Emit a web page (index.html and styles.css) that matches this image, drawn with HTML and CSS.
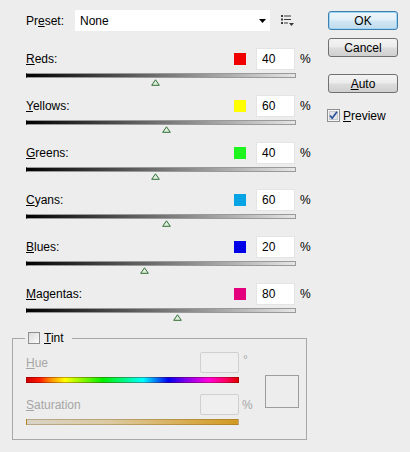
FILE: index.html
```html
<!DOCTYPE html>
<html>
<head>
<meta charset="utf-8">
<link rel="stylesheet" href="styles.css">
</head>
<body>
<div class="dialog">
  <div class="main">
    <div class="preset">
      <span class="preset-label">Pr<u>e</u>set:</span>
      <div class="select">
        <span>None</span>
        <svg class="arrow" width="7" height="4" viewBox="0 0 7 4"><path d="M0 0H7L3.5 4Z" fill="#000"/></svg>
      </div>
      <svg class="menu-icon" width="13" height="11" viewBox="0 0 13 11">
        <g fill="#3a3a3a">
          <rect x="0" y="0" width="2" height="2"/><rect x="3" y="0.5" width="7" height="1"/>
          <rect x="0" y="3.5" width="2" height="2"/><rect x="3" y="4" width="7" height="1"/>
          <rect x="0" y="7" width="2" height="2"/><rect x="3" y="7.5" width="4" height="1"/>
          <path d="M8 8H13L10.5 11Z"/>
        </g>
      </svg>
    </div>

    <div class="rows">
      <div class="row">
        <div class="row-top"><span class="lbl"><u>R</u>eds:</span><span class="swatch sw-red"></span><span class="num">40</span><span class="pct">%</span></div>
        <div class="slider"><span class="thumb" style="left:48%"><svg width="9" height="7" viewBox="0 0 9 7"><path d="M4.5 0.8L8.3 6.3H0.7Z" fill="#dfeedd" stroke="#2f6e35" stroke-width="1"/></svg></span></div>
      </div>
      <div class="row">
        <div class="row-top"><span class="lbl"><u>Y</u>ellows:</span><span class="swatch sw-yellow"></span><span class="num">60</span><span class="pct">%</span></div>
        <div class="slider"><span class="thumb" style="left:52%"><svg width="9" height="7" viewBox="0 0 9 7"><path d="M4.5 0.8L8.3 6.3H0.7Z" fill="#dfeedd" stroke="#2f6e35" stroke-width="1"/></svg></span></div>
      </div>
      <div class="row">
        <div class="row-top"><span class="lbl"><u>G</u>reens:</span><span class="swatch sw-green"></span><span class="num">40</span><span class="pct">%</span></div>
        <div class="slider"><span class="thumb" style="left:48%"><svg width="9" height="7" viewBox="0 0 9 7"><path d="M4.5 0.8L8.3 6.3H0.7Z" fill="#dfeedd" stroke="#2f6e35" stroke-width="1"/></svg></span></div>
      </div>
      <div class="row">
        <div class="row-top"><span class="lbl"><u>C</u>yans:</span><span class="swatch sw-cyan"></span><span class="num">60</span><span class="pct">%</span></div>
        <div class="slider"><span class="thumb" style="left:52%"><svg width="9" height="7" viewBox="0 0 9 7"><path d="M4.5 0.8L8.3 6.3H0.7Z" fill="#dfeedd" stroke="#2f6e35" stroke-width="1"/></svg></span></div>
      </div>
      <div class="row">
        <div class="row-top"><span class="lbl"><u>B</u>lues:</span><span class="swatch sw-blue"></span><span class="num">20</span><span class="pct">%</span></div>
        <div class="slider"><span class="thumb" style="left:44%"><svg width="9" height="7" viewBox="0 0 9 7"><path d="M4.5 0.8L8.3 6.3H0.7Z" fill="#dfeedd" stroke="#2f6e35" stroke-width="1"/></svg></span></div>
      </div>
      <div class="row">
        <div class="row-top"><span class="lbl"><u>M</u>agentas:</span><span class="swatch sw-magenta"></span><span class="num">80</span><span class="pct">%</span></div>
        <div class="slider"><span class="thumb" style="left:56%"><svg width="9" height="7" viewBox="0 0 9 7"><path d="M4.5 0.8L8.3 6.3H0.7Z" fill="#dfeedd" stroke="#2f6e35" stroke-width="1"/></svg></span></div>
      </div>
    </div>

    <fieldset class="tint">
      <legend class="tint-legend"><span class="cbox"></span><span><u>T</u>int</span></legend>
      <div class="tint-body">
        <div class="tint-controls">
          <div class="trow"><span class="dlbl"><u>H</u>ue</span><span class="dnum"></span><span class="unit deg">°</span></div>
          <div class="hue-bar"></div>
          <div class="trow trow-sat"><span class="dlbl"><u>S</u>aturation</span><span class="dnum"></span><span class="unit per">%</span></div>
          <div class="sat-bar"></div>
        </div>
        <div class="tint-swatch"></div>
      </div>
    </fieldset>
  </div>

  <div class="side">
    <button class="btn btn-ok">OK</button>
    <button class="btn btn-cancel">Cancel</button>
    <button class="btn btn-auto"><u>A</u>uto</button>
    <div class="preview">
      <svg width="13" height="13" viewBox="0 0 13 13">
        <rect x="0.5" y="0.5" width="12" height="12" fill="#f4f4f4" stroke="#8e8f8f"/>
        <rect x="2.5" y="2.5" width="8" height="8" fill="#e2e4e8" stroke="#c6c9ce"/>
        <path d="M3 6.5L5.2 9.2L10 2.8" fill="none" stroke="#2a4f9a" stroke-width="1.7"/>
      </svg>
      <span><u>P</u>review</span>
    </div>
  </div>
</div>
</body>
</html>
```

FILE: styles.css
```css
html, body {
  margin: 0;
  padding: 0;
}

body {
  background: #ededed;
  font-family: "Liberation Sans", Arial, sans-serif;
  font-size: 12px;
  color: #000;
  width: 410px;
  height: 452px;
  overflow: hidden;
}

u {
  text-decoration: underline;
  text-underline-offset: 1px;
}

.dialog {
  display: flex;
  padding: 10px 0 0 12px;
}

.main {
  width: 300px;
}

/* preset row */
.preset {
  display: flex;
  align-items: center;
  height: 21px;
  padding-left: 14px;
}

.preset-label {
  width: 49px;
}

.select {
  width: 195px;
  height: 21px;
  box-sizing: border-box;
  background: #fff;
  display: flex;
  align-items: center;
  justify-content: space-between;
  padding: 0 4px 0 5px;
}

.arrow {
  display: block;
}

.menu-icon {
  display: block;
  margin-left: 11px;
  margin-top: -1px;
}

/* channel rows */
.rows {
  margin-top: 17px;
  padding-left: 14px;
}

.row {
  height: 47px;
}

.row-top {
  display: flex;
  align-items: center;
  height: 22px;
}

.lbl {
  flex: 1;
}

.swatch {
  width: 12px;
  height: 12px;
  margin-right: 10px;
}

.sw-red { background: #f00000; }
.sw-yellow { background: #ffff00; }
.sw-green { background: #1ef41e; }
.sw-cyan { background: #0aa3e6; }
.sw-blue { background: #0000e6; }
.sw-magenta { background: #e4007c; }

.num {
  width: 39px;
  height: 22px;
  box-sizing: border-box;
  background: #fff;
  border: 1px solid #e4e4e4;
  padding-left: 5px;
  display: flex;
  align-items: center;
}

.pct {
  width: 12px;
  margin-left: 5px;
}

.slider {
  position: relative;
  margin-top: 3px;
  width: 270px;
  height: 5px;
  box-sizing: border-box;
  border: 1px solid #9a9a9a;
  border-left-color: #000;
  background: linear-gradient(to right, #000 0%, #e6e6e6 100%);
}

.thumb {
  position: absolute;
  top: 5px;
  width: 9px;
  height: 7px;
  margin-left: -4.5px;
}

.thumb svg {
  display: block;
}

/* tint group */
.tint {
  margin: 1px 0 0 0;
  width: 295px;
  box-sizing: border-box;
  border: 1px solid #a8a8a8;
  padding: 7px 0 14px 13px;
  min-width: 0;
}

.tint-legend {
  display: flex;
  align-items: center;
  height: 14px;
  line-height: 14px;
  padding: 0 8px 0 3px;
  margin-left: -1px;
}

.cbox {
  width: 12px;
  height: 12px;
  box-sizing: border-box;
  border: 1px solid #8e8f8f;
  background: linear-gradient(135deg, #dcdcdc, #fbfbfb);
  margin-right: 4px;
}

.tint-body {
  display: flex;
}

.tint-controls {
  width: 232px;
}

.trow {
  display: flex;
  align-items: center;
  height: 21px;
  color: #a6a6a6;
}

.trow-sat {
  margin-top: 11px;
}

.dlbl {
  flex: 1;
}

.dnum {
  width: 39px;
  height: 21px;
  box-sizing: border-box;
  border: 1px solid #d0d0d0;
  border-radius: 2px;
  background: #efefef;
}

.unit {
  width: 19px;
  box-sizing: border-box;
}

.deg {
  padding-left: 4px;
  align-self: flex-start;
  margin-top: 1px;
}

.per {
  padding-left: 3px;
}

.hue-bar {
  width: 213px;
  height: 6px;
  margin-top: 4px;
  box-sizing: border-box;
  border: 1px solid rgba(90, 0, 0, 0.35);
  background: linear-gradient(to right,
    #d00000 0%, #ff1a00 6%, #ff8a00 11%, #ffff00 18%,
    #00f000 36%, #00ffff 55%, #0000f0 67%,
    #8800ee 76%, #ff00dd 86%, #ff0066 94%, #e00000 100%);
}

.sat-bar {
  width: 213px;
  height: 6px;
  margin-top: 4px;
  box-sizing: border-box;
  border: 1px solid rgba(120, 90, 30, 0.35);
  background: linear-gradient(to right, #d9d4c8 0%, #dcc9a0 40%, #d8ad52 75%, #d29a22 100%);
}

.tint-swatch {
  width: 34px;
  height: 33px;
  box-sizing: border-box;
  border: 1px solid #9d9d9d;
  margin-left: 7px;
  margin-top: 23px;
}

/* right column */
.side {
  margin-left: 16px;
  width: 70px;
  display: flex;
  flex-direction: column;
}

.btn {
  width: 70px;
  height: 19px;
  box-sizing: border-box;
  border: 1px solid #707070;
  border-radius: 3px;
  background: linear-gradient(#f4f4f4 0%, #ebebeb 48%, #dddddd 52%, #cfcfcf 100%);
  font-family: "Liberation Sans", Arial, sans-serif;
  font-size: 12px;
  color: #000;
  padding: 0;
  line-height: 16px;
}

.btn-ok {
  margin-top: 1px;
  border-color: #3c7fb1;
  box-shadow: inset 0 0 0 1px #9ed5f2;
  background: linear-gradient(#edf6fb 0%, #e2eff7 48%, #d0e6f3 52%, #c1dcee 100%);
}

.btn-cancel {
  margin-top: 8px;
}

.btn-auto {
  margin-top: 17px;
}

.preview {
  display: flex;
  align-items: center;
  margin-top: 16px;
  margin-left: -1px;
  height: 13px;
}

.preview svg {
  display: block;
  margin-right: 3px;
}
```
